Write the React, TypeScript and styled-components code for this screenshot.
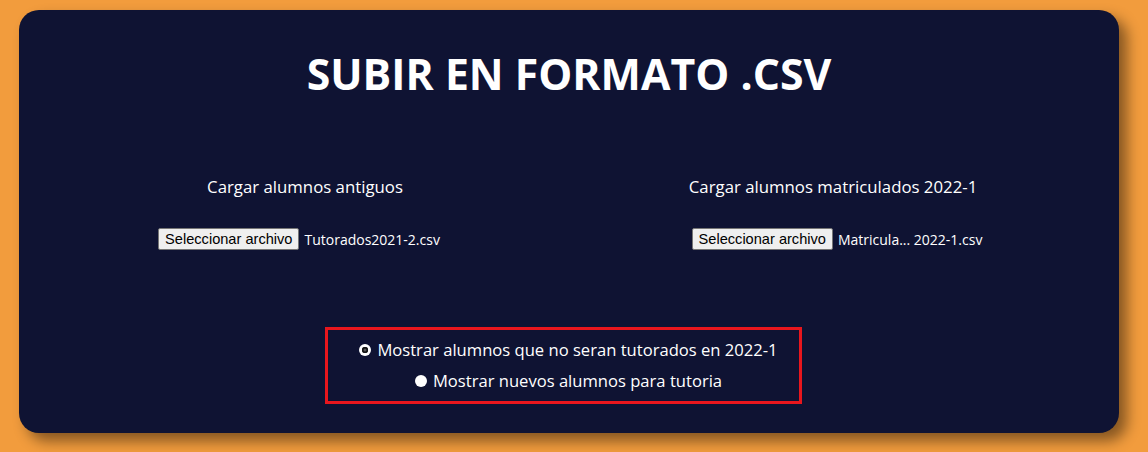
import styled, { createGlobalStyle } from "styled-components";

const GlobalStyle = createGlobalStyle`
  html, body {
    margin: 0;
    padding: 0;
    background: #f29c3d;
    height: 100%;
    overflow: hidden;
  }
  body {
    font-family: "Open Sans", "Noto Sans", sans-serif;
  }
`;

const Page = styled.div`
  padding: 10px 29px 0 19px;
`;

const Card = styled.section`
  width: 1100px;
  height: 423px;
  box-sizing: border-box;
  background: #0f1333;
  border-radius: 20px;
  box-shadow: 8px 8px 14px rgba(0, 0, 0, 0.45);
  color: #fff;
  padding: 37px 22px 0;
  display: flex;
  flex-direction: column;
  align-items: center;
`;

const Title = styled.h1`
  margin: 0;
  font-size: 42.8px;
  font-weight: 700;
  line-height: 54px;
`;

const Columns = styled.div`
  width: 100%;
  display: grid;
  grid-template-columns: 1fr 1fr;
  margin-top: 75px;
`;

const Column = styled.div`
  display: flex;
  flex-direction: column;
  align-items: center;
`;

const Label = styled.div`
  font-size: 16.8px;
  line-height: 22px;
`;

const FileRow = styled.div<{ $shift: number }>`
  display: flex;
  align-items: center;
  margin-top: 30px;
  margin-left: ${(p) => p.$shift}px;
`;

const FileButton = styled.button`
  font-family: Arial, "Liberation Sans", sans-serif;
  font-size: 14.6px;
  color: #000;
  background: #efefef;
  border: 1px solid #767676;
  border-radius: 2px;
  padding: 1px 6px;
  height: 22px;
  line-height: 18px;
`;

const FileName = styled.span`
  font-size: 14px;
  margin-left: 5px;
`;

const RadioBox = styled.div`
  margin-top: 77px;
  margin-right: 11px;
  width: 477px;
  height: 77px;
  box-sizing: border-box;
  border: 3px solid #e8161d;
  padding-left: 10px;
  display: flex;
  flex-direction: column;
  align-items: center;
  justify-content: center;
  gap: 7px;
`;

const RadioRow = styled.label`
  display: flex;
  align-items: center;
  font-size: 16.6px;
  line-height: 24px;
`;

const Dot = styled.span<{ $checked?: boolean }>`
  width: 12px;
  height: 12px;
  border-radius: 50%;
  background: #fff;
  margin-right: 6px;
  display: flex;
  align-items: center;
  justify-content: center;
  &::after {
    content: "";
    display: ${(p) => (p.$checked ? "block" : "none")};
    width: 6px;
    height: 6px;
    border-radius: 50%;
    background: #1a1a1a;
    box-shadow: inset 0 0 0 1.5px #111, inset 0 0 0 3px #555;
  }
`;

const uploads = [
  { label: "Cargar alumnos antiguos", file: "Tutorados2021-2.csv", shift: -12 },
  { label: "Cargar alumnos matriculados 2022-1", file: "Matricula... 2022-1.csv", shift: 8 },
];

export default function App() {
  return (
    <Page>
      <GlobalStyle />
      <Card>
        <Title>SUBIR EN FORMATO .CSV</Title>
        <Columns>
          {uploads.map((u) => (
            <Column key={u.label}>
              <Label>{u.label}</Label>
              <FileRow $shift={u.shift}>
                <FileButton type="button">Seleccionar archivo</FileButton>
                <FileName>{u.file}</FileName>
              </FileRow>
            </Column>
          ))}
        </Columns>
        <RadioBox>
          <RadioRow>
            <Dot $checked />
            Mostrar alumnos que no seran tutorados en 2022-1
          </RadioRow>
          <RadioRow>
            <Dot />
            Mostrar nuevos alumnos para tutoria
          </RadioRow>
        </RadioBox>
      </Card>
    </Page>
  );
}
